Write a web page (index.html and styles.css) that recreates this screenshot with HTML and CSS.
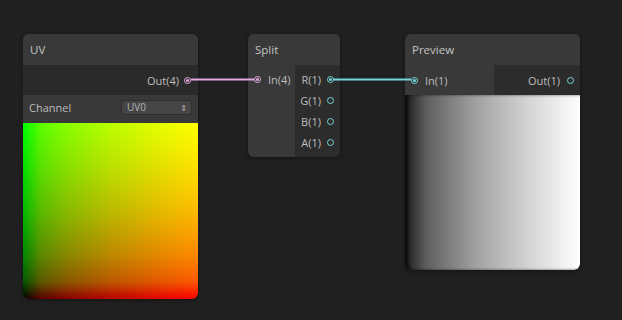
FILE: index.html
```html
<!DOCTYPE html>
<html lang="en">
<head>
    <meta charset="UTF-8">
    <title>Shader Graph</title>
    <link rel="stylesheet" href="styles.css">
</head>
<body>
    <div class="graph">
        <!-- connections between ports -->
        <svg class="edges" width="622" height="320">
            <line x1="191" y1="79.5" x2="254" y2="79.5" class="edge-v4"/>
            <line x1="333" y1="79.5" x2="411" y2="79.5" class="edge-v1"/>
        </svg>

        <div class="node node-uv">
            <div class="node-title">UV</div>
            <div class="out-row">
                <span class="port-label">Out(4)</span>
                <span class="port v4 connected"></span>
            </div>
            <div class="control-row">
                <span class="control-label">Channel</span>
                <span class="dropdown">UV0<span class="arrows">&#8661;</span></span>
            </div>
            <div class="uv-preview"></div>
        </div>

        <div class="node node-split">
            <div class="node-title">Split</div>
            <div class="split-body">
                <div class="inputs">
                    <div class="port-row">
                        <span class="port v4 connected"></span>
                        <span class="port-label">In(4)</span>
                    </div>
                </div>
                <div class="outputs">
                    <div class="port-row">
                        <span class="port-label">R(1)</span>
                        <span class="port v1 connected"></span>
                    </div>
                    <div class="port-row">
                        <span class="port-label">G(1)</span>
                        <span class="port v1"></span>
                    </div>
                    <div class="port-row">
                        <span class="port-label">B(1)</span>
                        <span class="port v1"></span>
                    </div>
                    <div class="port-row">
                        <span class="port-label">A(1)</span>
                        <span class="port v1"></span>
                    </div>
                </div>
            </div>
        </div>

        <div class="node node-preview">
            <div class="node-title">Preview</div>
            <div class="io-row">
                <div class="in-side">
                    <span class="port v1 connected"></span>
                    <span class="port-label">In(1)</span>
                </div>
                <div class="out-side">
                    <span class="port-label">Out(1)</span>
                    <span class="port v1"></span>
                </div>
            </div>
            <div class="gray-preview"></div>
        </div>
    </div>
</body>
</html>
```

FILE: styles.css
```css
body {
    margin: 0;
    background: #202020;
    font-family: "Open Sans", "DejaVu Sans", sans-serif;
}

.graph {
    position: relative;
    width: 622px;
    height: 320px;
    overflow: hidden;
}

.edges {
    position: absolute;
    left: 0;
    top: 0;
    z-index: 2;
}

.edge-v4 { stroke: #e2a8df; stroke-width: 2; }
.edge-v1 { stroke: #74d6d9; stroke-width: 2; }

/* nodes sit on a free canvas */
.node {
    position: absolute;
    top: 34px;
    background: #2c2c2c;
    border-radius: 6px;
    overflow: hidden;
    box-shadow: 0 1px 4px rgba(0,0,0,0.45);
    color: #bdbdbd;
    font-size: 11px;
}

.node-uv { left: 23px; width: 175px; }
.node-split { left: 248px; width: 92px; }
.node-preview { left: 405px; width: 175px; }

.node-title {
    height: 31px;
    line-height: 31px;
    padding-left: 7px;
    background: #393939;
    font-size: 11.5px;
    color: #c4c4c4;
}

.port {
    width: 5px;
    height: 5px;
    border-radius: 50%;
    border: 1.5px solid;
    flex-shrink: 0;
    position: relative;
}

.port.v4 { border-color: #e2a8df; }
.port.v1 { border-color: #74d6d9; }

.port.connected::after {
    content: '';
    position: absolute;
    left: 1px;
    top: 1px;
    width: 3px;
    height: 3px;
    border-radius: 50%;
}

.port.v4.connected::after { background: #e2a8df; }
.port.v1.connected::after { background: #74d6d9; }

/* UV node */
.out-row {
    height: 30px;
    background: #2a2a2a;
    display: flex;
    justify-content: flex-end;
    align-items: center;
    gap: 5px;
    padding-right: 7px;
}

.control-row {
    height: 28px;
    background: #393939;
    display: flex;
    align-items: center;
    justify-content: space-between;
    padding: 0 6px 3px 6px;
    box-sizing: border-box;
}

.dropdown {
    width: 60px;
    height: 13px;
    line-height: 13px;
    padding: 0 4px 0 5px;
    background: #464646;
    border: 1px solid #2e2e2e;
    border-radius: 3px;
    font-size: 10px;
    color: #b4b4b4;
    display: flex;
    justify-content: space-between;
}

.arrows {
    font-size: 8px;
    color: #bdbdbd;
}

/* gamma-corrected uv ramp */
.uv-preview {
    height: 176px;
    background:
        linear-gradient(to top, #000000, #005900 10%, #008800 25%, #00ba00 50%, #00e000 75%, #00ff00),
        linear-gradient(to right, #000000, #590000 10%, #880000 25%, #ba0000 50%, #e00000 75%, #ff0000);
    background-blend-mode: screen;
    border-radius: 0 0 6px 6px;
}

/* Split node */
.split-body {
    display: flex;
    height: 92px;
}

.inputs {
    width: 47px;
    background: #393939;
    padding-top: 4px;
}

.outputs {
    flex: 1;
    background: #2c2c2c;
    padding-top: 4px;
}

.port-row {
    height: 21px;
    display: flex;
    align-items: center;
    gap: 6px;
}

.inputs .port-row { padding-left: 6px; gap: 7px; }
.outputs .port-row { justify-content: flex-end; padding-right: 6px; }

/* Preview node */
.io-row {
    display: flex;
    height: 30px;
}

.in-side {
    width: 83px;
    background: #393939;
    display: flex;
    align-items: center;
    gap: 7px;
    padding-left: 6px;
}

.out-side {
    flex: 1;
    background: #2c2c2c;
    display: flex;
    align-items: center;
    justify-content: flex-end;
    gap: 7px;
    padding-right: 6px;
}

.gray-preview {
    height: 175px;
    background: linear-gradient(to right, #1a1a1a, #5e5e5e 12%, #a0a0a0 40%, #d6d6d6 72%, #ffffff);
    box-shadow: inset 3px 0 3px rgba(0,0,0,0.6);
    border-radius: 0 0 6px 6px;
}
```
